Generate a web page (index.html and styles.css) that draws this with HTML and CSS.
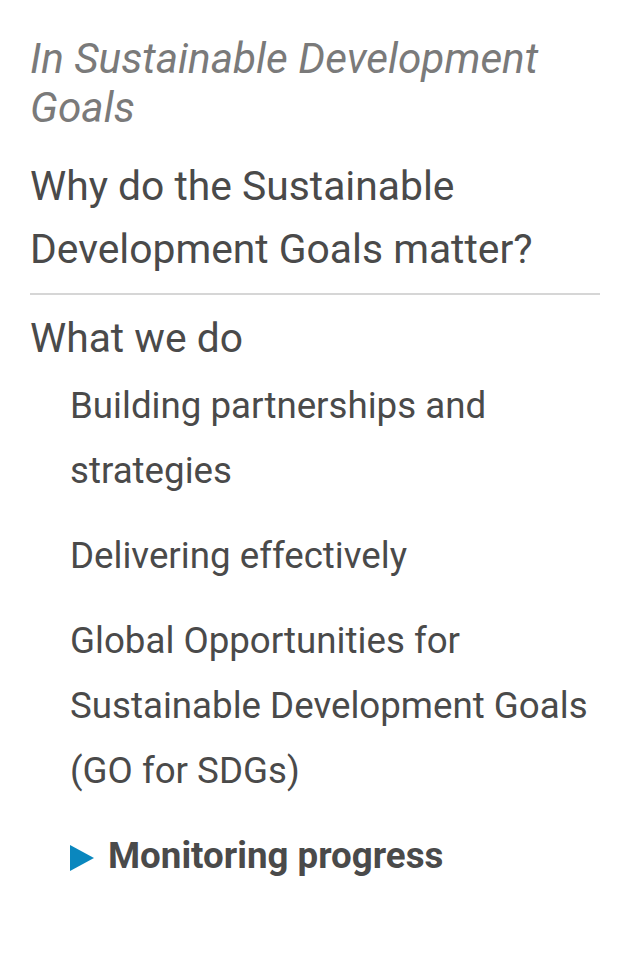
FILE: index.html
```html
<!DOCTYPE html>
<html>
<head>
<meta charset="utf-8">
<link rel="stylesheet" href="styles.css">
</head>
<body>
<nav class="side">
  <p class="parent">In Sustainable Development Goals</p>
  <ul class="menu">
    <li class="item sep"><a href="#">Why do the Sustainable Development Goals matter?</a></li>
    <li class="item">
      <a href="#">What we do</a>
      <ul class="sub">
        <li><a href="#">Building partnerships and strategies</a></li>
        <li><a href="#">Delivering effectively</a></li>
        <li><a href="#">Global Opportunities for Sustainable Development Goals (GO for SDGs)</a></li>
        <li class="active"><span class="tri"></span><a href="#">Monitoring progress</a></li>
      </ul>
    </li>
  </ul>
</nav>
</body>
</html>
```
FILE: styles.css
```css
html, body { margin: 0; padding: 0; background: #fff; }
body { font-family: Roboto, "Noto Sans", sans-serif; color: #4a4a4a; }
.side { padding: 34px 21px 0 30px; }
.parent { margin: 0; font-style: italic; font-size: 42.3px; line-height: 49px; color: #7a7a7a; }
.menu, .sub { list-style: none; margin: 0; padding: 0; }
a { color: inherit; text-decoration: none; }
.item > a { display: block; font-size: 40.8px; line-height: 63px; }
.menu { margin-top: 23px; }
.sep { border-bottom: 2px solid #d6d6d6; padding-bottom: 12px; margin-bottom: 12px; }
.sub { padding-left: 40px; margin-top: 3px; }
.sub li { font-size: 36.7px; line-height: 65px; margin-top: 20px; }
.sub li:first-child { margin-top: 0; }
.sub .active { display: flex; align-items: center; gap: 14px; font-weight: 700; }
.tri { width: 0; height: 0; margin-top: 4px; border-left: 24px solid #0a87be; border-top: 13px solid transparent; border-bottom: 13px solid transparent; }
```
